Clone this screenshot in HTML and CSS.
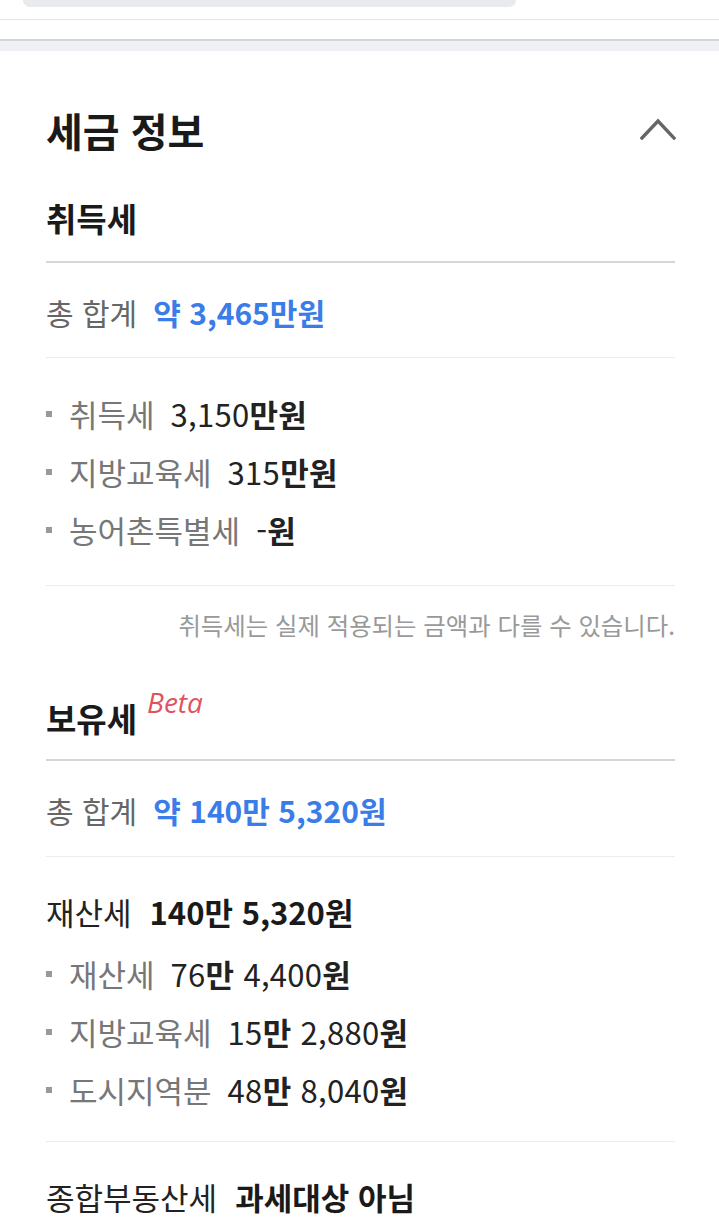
FILE: index.html
```html
<!DOCTYPE html>
<html lang="ko">
<head>
<meta charset="utf-8">
<link rel="stylesheet" href="styles.css">
</head>
<body>
<div class="topbar">
  <div class="search-stub"></div>
</div>
<div class="divider"></div>
<section class="section">
  <div class="title-row">
    <h2 class="title">세금 정보</h2>
    <svg class="chevron" width="36" height="22" viewBox="0 0 36 22"><polyline points="2,20 18,3 34,20" fill="none" stroke="#666" stroke-width="3.4" stroke-linecap="square"/></svg>
  </div>

  <h3 class="subhead first">취득세</h3>
  <div class="total acq-total"><span class="lbl">총 합계</span><span class="val">약 3,465만원</span></div>
  <ul class="items acq-items">
    <li><span class="lbl">취득세</span><span class="num">3,150<b>만원</b></span></li>
    <li><span class="lbl">지방교육세</span><span class="num">315<b>만원</b></span></li>
    <li><span class="lbl">농어촌특별세</span><span class="num">-<b>원</b></span></li>
  </ul>
  <p class="note">취득세는 실제 적용되는 금액과 다를 수 있습니다.</p>

  <h3 class="subhead second">보유세<span class="beta">Beta</span></h3>
  <div class="total hold-total"><span class="lbl">총 합계</span><span class="val">약 140만 5,320원</span></div>
  <div class="prop-row"><span class="dlbl">재산세</span><b class="bval">140만 5,320원</b></div>
  <ul class="items hold-items">
    <li><span class="lbl">재산세</span><span class="num">76<b>만</b> 4,400<b>원</b></span></li>
    <li><span class="lbl">지방교육세</span><span class="num">15<b>만</b> 2,880<b>원</b></span></li>
    <li><span class="lbl">도시지역분</span><span class="num">48<b>만</b> 8,040<b>원</b></span></li>
  </ul>
  <div class="prop-row last"><span class="dlbl">종합부동산세</span><b class="bval">과세대상 아님</b></div>
</section>
</body>
</html>
```

FILE: styles.css
```css
* { box-sizing: border-box; }
html, body { margin: 0; padding: 0; background: #fff; }
body {
  width: 719px;
  font-family: "Noto Sans CJK KR", "Noto Sans", sans-serif;
  color: #222;
}
.topbar {
  height: 20px;
  border-bottom: 1px solid #e6e6e6;
  padding-left: 23px;
}
.search-stub {
  width: 493px;
  height: 7px;
  background: #e9eaee;
  border-radius: 0 0 7px 7px;
}
.divider {
  margin-top: 19px;
  height: 12px;
  border-top: 2px solid #d2d4d8;
  background: #eef0f3;
}
.section {
  padding: 0 44px 40px 46px;
}
.title-row {
  margin-top: 55px;
  height: 48px;
  display: flex;
  align-items: center;
  justify-content: space-between;
}
.title {
  margin: 0;
  font-size: 40px;
  line-height: 48px;
  font-weight: 700;
  color: #1a1a1a;
}
.chevron { display: block; margin-right: -1px; margin-top: -2px; }
.subhead {
  margin: 0;
  font-size: 33px;
  line-height: 40px;
  height: 40px;
  box-sizing: content-box;
  font-weight: 700;
  color: #1a1a1a;
  border-bottom: 2px solid #d6d6d6;
}
.subhead.first { margin-top: 44px; padding-bottom: 23px; }
.subhead.second { margin-top: 58px; padding-bottom: 21px; }
.beta {
  font-family: "Open Sans", "Noto Sans", sans-serif;
  font-style: italic;
  font-weight: 400;
  font-size: 28px;
  line-height: 0;
  color: #e0525f;
  margin-left: 10px;
  position: relative;
  top: -19px;
}
.total {
  font-size: 30px;
  line-height: 40px;
  display: flex;
  gap: 16px;
  border-bottom: 1px solid #ececec;
}
.acq-total { margin-top: 29px; padding-bottom: 25px; }
.hold-total { margin-top: 29px; padding-bottom: 26px; }
.total .lbl { color: #666; }
.total .val { color: #3a7de8; font-weight: 700; }
.items {
  list-style: none;
  margin: 0;
  padding: 0;
  font-size: 31px;
}
.items li {
  height: 58px;
  line-height: 58px;
  display: flex;
  align-items: center;
  gap: 16px;
}
.items li::before {
  content: "";
  width: 6px;
  height: 6px;
  background: #999;
  margin-right: 1px;
  flex: none;
}
.items .lbl { color: #777; }
.items .num { color: #222; letter-spacing: 0.3px; }
.items .num b { font-weight: 700; }
.acq-items {
  margin-top: 27px;
  padding-bottom: 26px;
  border-bottom: 1px solid #ececec;
}
.hold-items {
  margin-top: 13px;
  padding-bottom: 22px;
  border-bottom: 1px solid #ececec;
}
.note {
  margin: 24px 0 0;
  font-size: 24.4px;
  line-height: 30px;
  text-align: right;
  color: #999;
}
.prop-row {
  margin-top: 35px;
  font-size: 31px;
  line-height: 40px;
  display: flex;
  gap: 18px;
}
.dlbl { color: #222; }
.bval { font-weight: 700; color: #1a1a1a; }
```
